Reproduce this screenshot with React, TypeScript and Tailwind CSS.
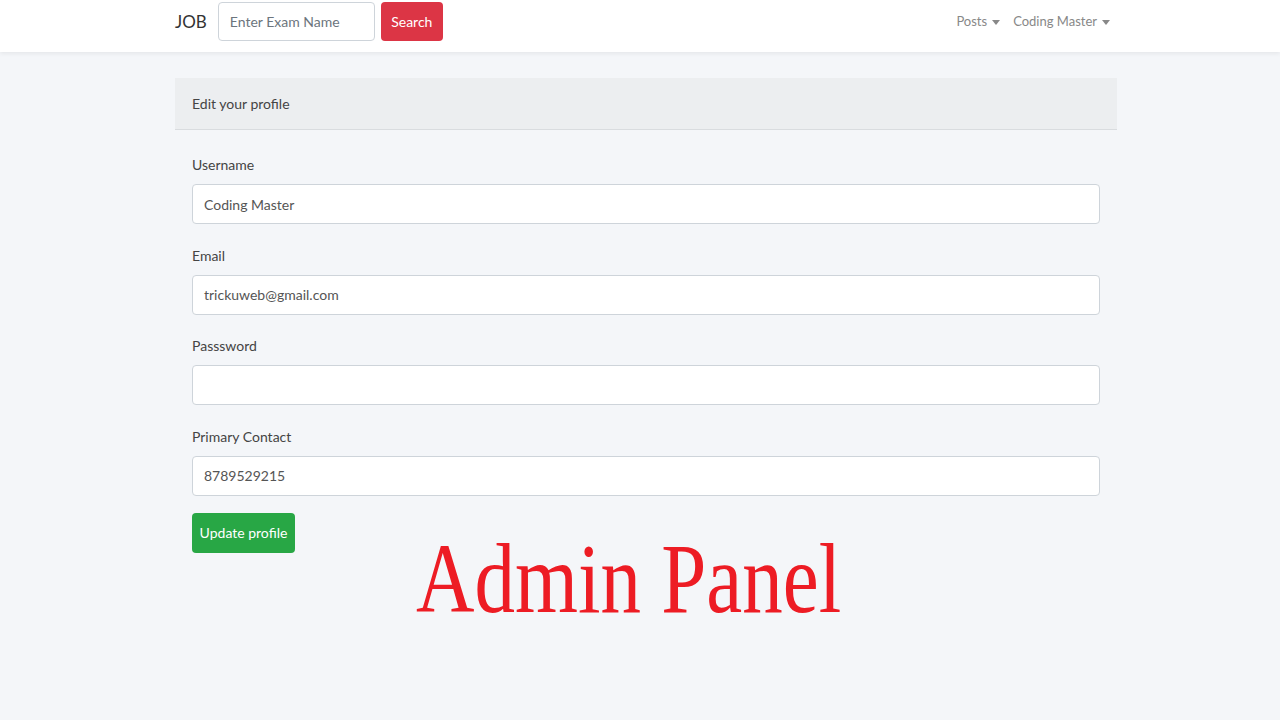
import React from "react";

const font = { fontFamily: "Lato, 'Noto Sans', sans-serif" };

function Caret() {
  return <span className="inline-block ml-[5px] align-middle border-t-[5px] border-t-current border-x-[4px] border-x-transparent" />;
}

function Field({ label, value }: { label: string; value: string }) {
  return (
    <div className="flex flex-col">
      <label className="text-[14px] text-[#444] leading-[22px] h-[22px]">{label}</label>
      <div className="mt-[8px] h-[40px] bg-white border border-[#ced4da] rounded-[4px] flex items-center px-[11px] text-[14px] text-[#555]">
        {value}
      </div>
    </div>
  );
}

export default function App() {
  return (
    <div className="min-h-[720px] bg-[#f4f6f9] relative" style={font}>
      <nav className="h-[52px] bg-white shadow-[0_2px_4px_rgba(0,0,0,0.06)] flex items-start pt-[2px]">
        <div className="ml-[175px] w-[935px] flex items-center">
          <span className="text-[17px] text-[#333] mr-[11px]">JOB</span>
          <div className="w-[157px] h-[39px] border border-[#ced4da] rounded-[4px] flex items-center px-[11px] text-[14px] text-[#6c757d] bg-white">
            Enter Exam Name
          </div>
          <div className="ml-[6px] w-[62px] h-[39px] bg-[#dc3545] rounded-[4px] text-white text-[14px] flex items-center justify-center">
            Search
          </div>
          <div className="ml-auto flex items-center text-[13px] text-[#888]">
            <span>Posts<Caret /></span>
            <span className="ml-[13px]">Coding Master<Caret /></span>
          </div>
        </div>
      </nav>
      <div className="ml-[175px] w-[942px] mt-[26px]">
        <div className="h-[52px] bg-[#eceef0] border-b border-[#d9dcdf] flex items-center px-[17px] text-[14px] text-[#444]">
          Edit your profile
        </div>
        <div className="px-[17px] pt-[24px] flex flex-col gap-[20.67px]">
          <Field label="Username" value="Coding Master" />
          <Field label="Email" value="trickuweb@gmail.com" />
          <Field label="Passsword" value="" />
          <Field label="Primary Contact" value="8789529215" />
        </div>
        <div className="px-[17px] mt-[17px]">
          <div className="w-[103px] h-[40px] bg-[#28a745] rounded-[4px] text-white text-[14px] flex items-center justify-center">
            Update profile
          </div>
        </div>
      </div>
      <div
        className="absolute left-[416px] top-[529px] text-[#ed1c24] text-[100px] leading-none whitespace-nowrap origin-left scale-x-[0.81]"
        style={{ fontFamily: "'Liberation Serif', serif" }}
      >
        Admin Panel
      </div>
    </div>
  );
}
